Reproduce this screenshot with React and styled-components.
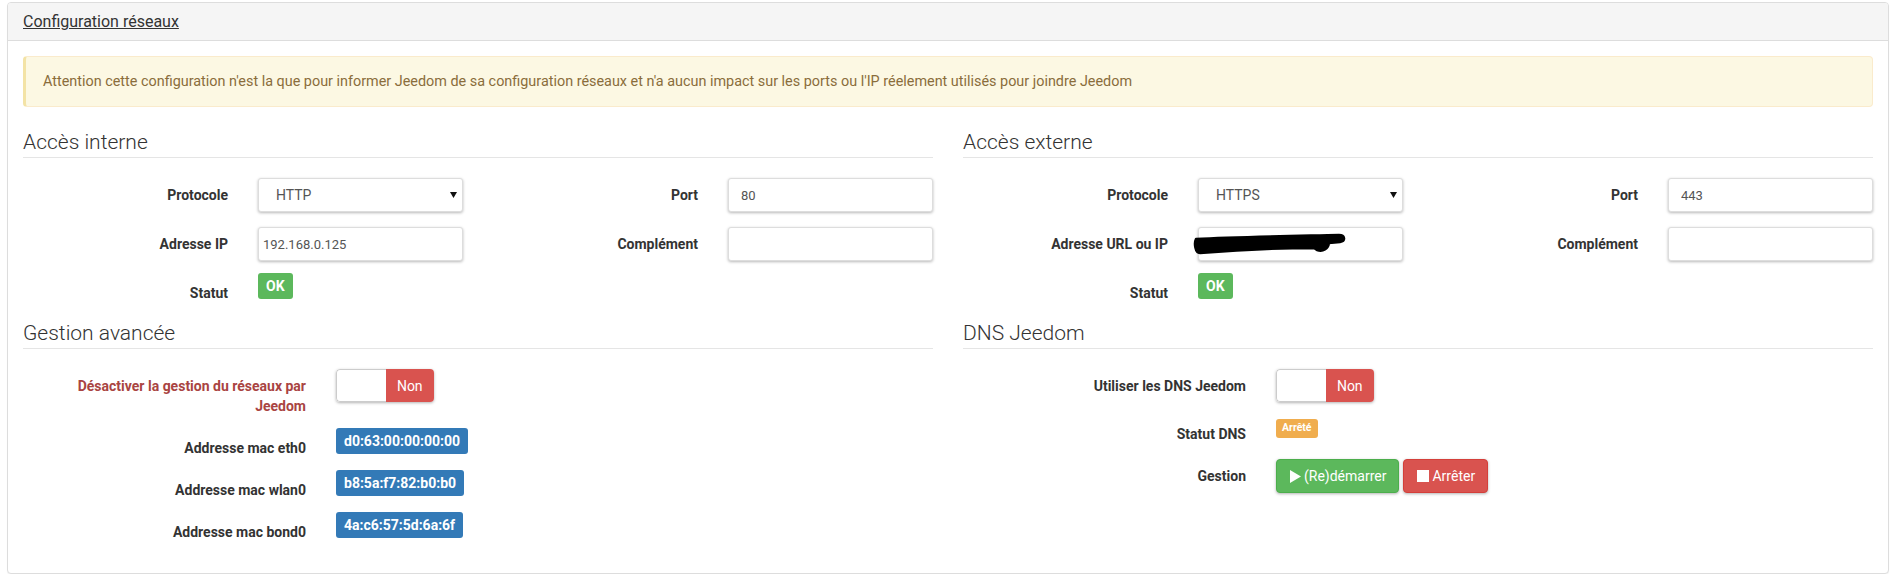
import React from "react";
import styled, { createGlobalStyle } from "styled-components";

const GlobalStyle = createGlobalStyle`
  * { box-sizing: border-box; }
  body {
    margin: 0;
    background: #fff;
    color: #333;
    font-family: Roboto, "Liberation Sans", sans-serif;
    font-size: 14px;
  }
`;

const tones = {
  success: "#5cb85c",
  primary: "#337ab7",
  danger: "#d9534f",
  warning: "#f0ad4e",
};

const Page = styled.div`
  padding: 2px 8px 0 7px;
`;

const Panel = styled.div`
  border: 1px solid #ddd;
  border-radius: 4px;
  background: #fff;
  box-shadow: 0 1px 1px rgba(0, 0, 0, 0.05);
`;

const PanelHeading = styled.div`
  background: #f5f5f5;
  border-bottom: 1px solid #ddd;
  border-radius: 3px 3px 0 0;
  padding: 8px 15px;
`;

const PanelTitle = styled.a`
  font-size: 16px;
  line-height: 21px;
  color: #333;
  text-decoration: underline;
`;

const PanelBody = styled.div`
  padding: 15px;
`;

const Alert = styled.div`
  background: #fcf8e3;
  border: 1px solid #faebcc;
  border-left: 3px solid #f3e3a6;
  border-radius: 4px;
  color: #8a6d3b;
  font-size: 14.4px;
  line-height: 20px;
  padding: 15px 17px 14px;
  margin-bottom: 23px;
`;

const Columns = styled.div`
  display: grid;
  grid-template-columns: 1fr 1fr;
  column-gap: 30px;
`;

const Legend = styled.div`
  font-size: 21px;
  font-weight: 300;
  line-height: 25px;
  padding-bottom: 2px;
  border-bottom: 1px solid #e5e5e5;
  margin-bottom: 20px;
  color: #333;
`;

const FieldGrid = styled.div`
  display: grid;
  grid-template-columns: 1fr 1fr;
  column-gap: 30px;
  row-gap: 15px;
  margin-bottom: 18px;
`;

const Stack = styled.div`
  display: flex;
  flex-direction: column;
  gap: 15px;
  padding-bottom: 16px;
`;

const Field = styled.div`
  display: grid;
  grid-template-columns: ${(p) => (p.$wide ? "283px 1fr" : "1fr 1fr")};
  column-gap: 30px;
  align-items: start;
`;

const Label = styled.label`
  text-align: right;
  font-weight: 700;
  font-size: 14px;
  line-height: 20px;
  padding-top: 7px;
  padding-left: ${(p) => (p.$danger ? "15px" : "0")};
  color: ${(p) => (p.$danger ? "#a94442" : "#333")};
`;

const Control = styled.div`
  position: relative;
  display: flex;
  gap: 4px;
  align-items: flex-start;
`;

const Input = styled.input`
  width: 100%;
  height: 34px;
  border: 1px solid #ddd;
  border-radius: 3px;
  box-shadow: 0 1px 3px rgba(0, 0, 0, 0.28);
  background: #fff;
  color: #555;
  font-family: inherit;
  font-size: 13px;
  padding: 0 ${(p) => (p.$tight ? "4px" : "12px")};
  outline: none;
`;

const Select = styled.select`
  width: 100%;
  height: 34px;
  border: 1px solid #ddd;
  border-radius: 3px;
  box-shadow: 0 1px 3px rgba(0, 0, 0, 0.28);
  background: #fff;
  color: #555;
  font-family: inherit;
  font-size: 14px;
  padding: 0 17px;
  appearance: none;
  outline: none;
`;

const Caret = styled.svg`
  position: absolute;
  right: 6px;
  top: 14px;
  pointer-events: none;
`;

const Redaction = styled.svg`
  position: absolute;
  display: block;
  left: -2px;
  top: 8px;
  overflow: visible;
  pointer-events: none;
`;

const Badge = styled.span`
  display: inline-block;
  background: ${(p) => tones[p.$tone]};
  color: #fff;
  font-weight: 700;
  border-radius: 3px;
  white-space: nowrap;
  font-size: ${(p) => (p.$small ? "10.5px" : "14px")};
  line-height: ${(p) => (p.$small ? "12px" : "20px")};
  padding: ${(p) => (p.$small ? "3px 6px 4px" : "3px 8px")};
  margin-top: ${(p) => (p.$small ? "2px" : "-3px")};
`;

const Toggle = styled.div`
  display: flex;
  width: 98px;
  height: 33px;
  border-radius: 4px;
  overflow: hidden;
  box-shadow: 0 1px 3px rgba(0, 0, 0, 0.3);
`;

const ToggleBlank = styled.span`
  flex: 1;
  background: #fff;
  border: 1px solid #ccc;
  border-right: none;
  border-radius: 4px 0 0 4px;
`;

const ToggleState = styled.span`
  flex: 1;
  display: flex;
  align-items: center;
  justify-content: center;
  background: #d9534f;
  color: #fff;
  font-size: 14px;
`;

const Button = styled.button`
  display: inline-flex;
  align-items: center;
  gap: 3px;
  height: 34px;
  padding: 0 12px 0 13px;
  border: 1px solid ${(p) => (p.$tone === "success" ? "#4cae4c" : "#d43f3a")};
  border-radius: 4px;
  background: ${(p) => tones[p.$tone]};
  color: #fff;
  font-family: inherit;
  font-size: 14px;
  box-shadow: 0 1px 3px rgba(0, 0, 0, 0.3);
  cursor: pointer;
`;

const TextField = ({ label, value, tight, children }) => (
  <Field>
    <Label>{label}</Label>
    <Control>
      <Input defaultValue={value} $tight={tight} />
      {children}
    </Control>
  </Field>
);

const SelectField = ({ label, value, options }) => (
  <Field>
    <Label>{label}</Label>
    <Control>
      <Select defaultValue={value}>
        {options.map((o) => (
          <option key={o}>{o}</option>
        ))}
      </Select>
      <Caret width="7" height="6" viewBox="0 0 7 6">
        <path d="M0 0h7L3.5 6z" fill="#111" />
      </Caret>
    </Control>
  </Field>
);

const AccessSection = ({ title, protocol, port, addressLabel, address, hidden }) => (
  <div>
    <Legend>{title}</Legend>
    <FieldGrid>
      <SelectField label="Protocole" value={protocol} options={["HTTP", "HTTPS"]} />
      <TextField label="Port" value={port} />
      <TextField label={addressLabel} value={address} tight>
        {hidden && (
          <Redaction width="150" height="18" viewBox="0 0 150 18">
            {/* marker stroke hiding the external address */}
            <path
              d="M0 4 C 40 2, 100 1, 143 0 C 149 0, 150 6, 144 7 L 133 8 C 132 14, 127 17, 121 15 L 118 13 C 85 13, 40 15, 4 18 C -1 18, -2 8, 0 4 Z"
              fill="#000"
              stroke="#000"
              strokeWidth="2.5"
              strokeLinejoin="round"
            />
          </Redaction>
        )}
      </TextField>
      <TextField label="Complément" value="" />
      <Field>
        <Label>Statut</Label>
        <Control>
          <Badge $tone="success">OK</Badge>
        </Control>
      </Field>
    </FieldGrid>
  </div>
);

const SwitchOff = () => (
  <Toggle>
    <ToggleBlank />
    <ToggleState>Non</ToggleState>
  </Toggle>
);

const macs = [
  ["Addresse mac eth0", "d0:63:00:00:00:00"],
  ["Addresse mac wlan0", "b8:5a:f7:82:b0:b0"],
  ["Addresse mac bond0", "4a:c6:57:5d:6a:6f"],
];

export default function App() {
  return (
    <Page>
      <GlobalStyle />
      <Panel>
        <PanelHeading>
          <PanelTitle>Configuration réseaux</PanelTitle>
        </PanelHeading>
        <PanelBody>
          <Alert>
            Attention cette configuration n'est la que pour informer Jeedom de sa configuration
            réseaux et n'a aucun impact sur les ports ou l'IP réelement utilisés pour joindre
            Jeedom
          </Alert>

          <Columns>
            <AccessSection
              title="Accès interne"
              protocol="HTTP"
              port="80"
              addressLabel="Adresse IP"
              address="192.168.0.125"
            />
            <AccessSection
              title="Accès externe"
              protocol="HTTPS"
              port="443"
              addressLabel="Adresse URL ou IP"
              address=""
              hidden
            />
          </Columns>

          <Columns>
            <div>
              <Legend>Gestion avancée</Legend>
              <Stack>
                <Field $wide>
                  <Label $danger>Désactiver la gestion du réseaux par Jeedom</Label>
                  <Control>
                    <SwitchOff />
                  </Control>
                </Field>
                {macs.map(([label, mac]) => (
                  <Field $wide key={label}>
                    <Label>{label}</Label>
                    <Control>
                      <Badge $tone="primary">{mac}</Badge>
                    </Control>
                  </Field>
                ))}
              </Stack>
            </div>
            <div>
              <Legend>DNS Jeedom</Legend>
              <Stack>
                <Field $wide>
                  <Label>Utiliser les DNS Jeedom</Label>
                  <Control>
                    <SwitchOff />
                  </Control>
                </Field>
                <Field $wide>
                  <Label>Statut DNS</Label>
                  <Control>
                    <Badge $tone="warning" $small>
                      Arrêté
                    </Badge>
                  </Control>
                </Field>
                <Field $wide>
                  <Label>Gestion</Label>
                  <Control>
                    <Button $tone="success">
                      <svg width="11" height="13" viewBox="0 0 11 13">
                        <path d="M0 0 L11 6.5 L0 13 Z" fill="#fff" />
                      </svg>
                      (Re)démarrer
                    </Button>
                    <Button $tone="danger">
                      <svg width="12" height="12" viewBox="0 0 12 12">
                        <rect width="12" height="12" fill="#fff" />
                      </svg>
                      Arrêter
                    </Button>
                  </Control>
                </Field>
              </Stack>
            </div>
          </Columns>
        </PanelBody>
      </Panel>
    </Page>
  );
}
